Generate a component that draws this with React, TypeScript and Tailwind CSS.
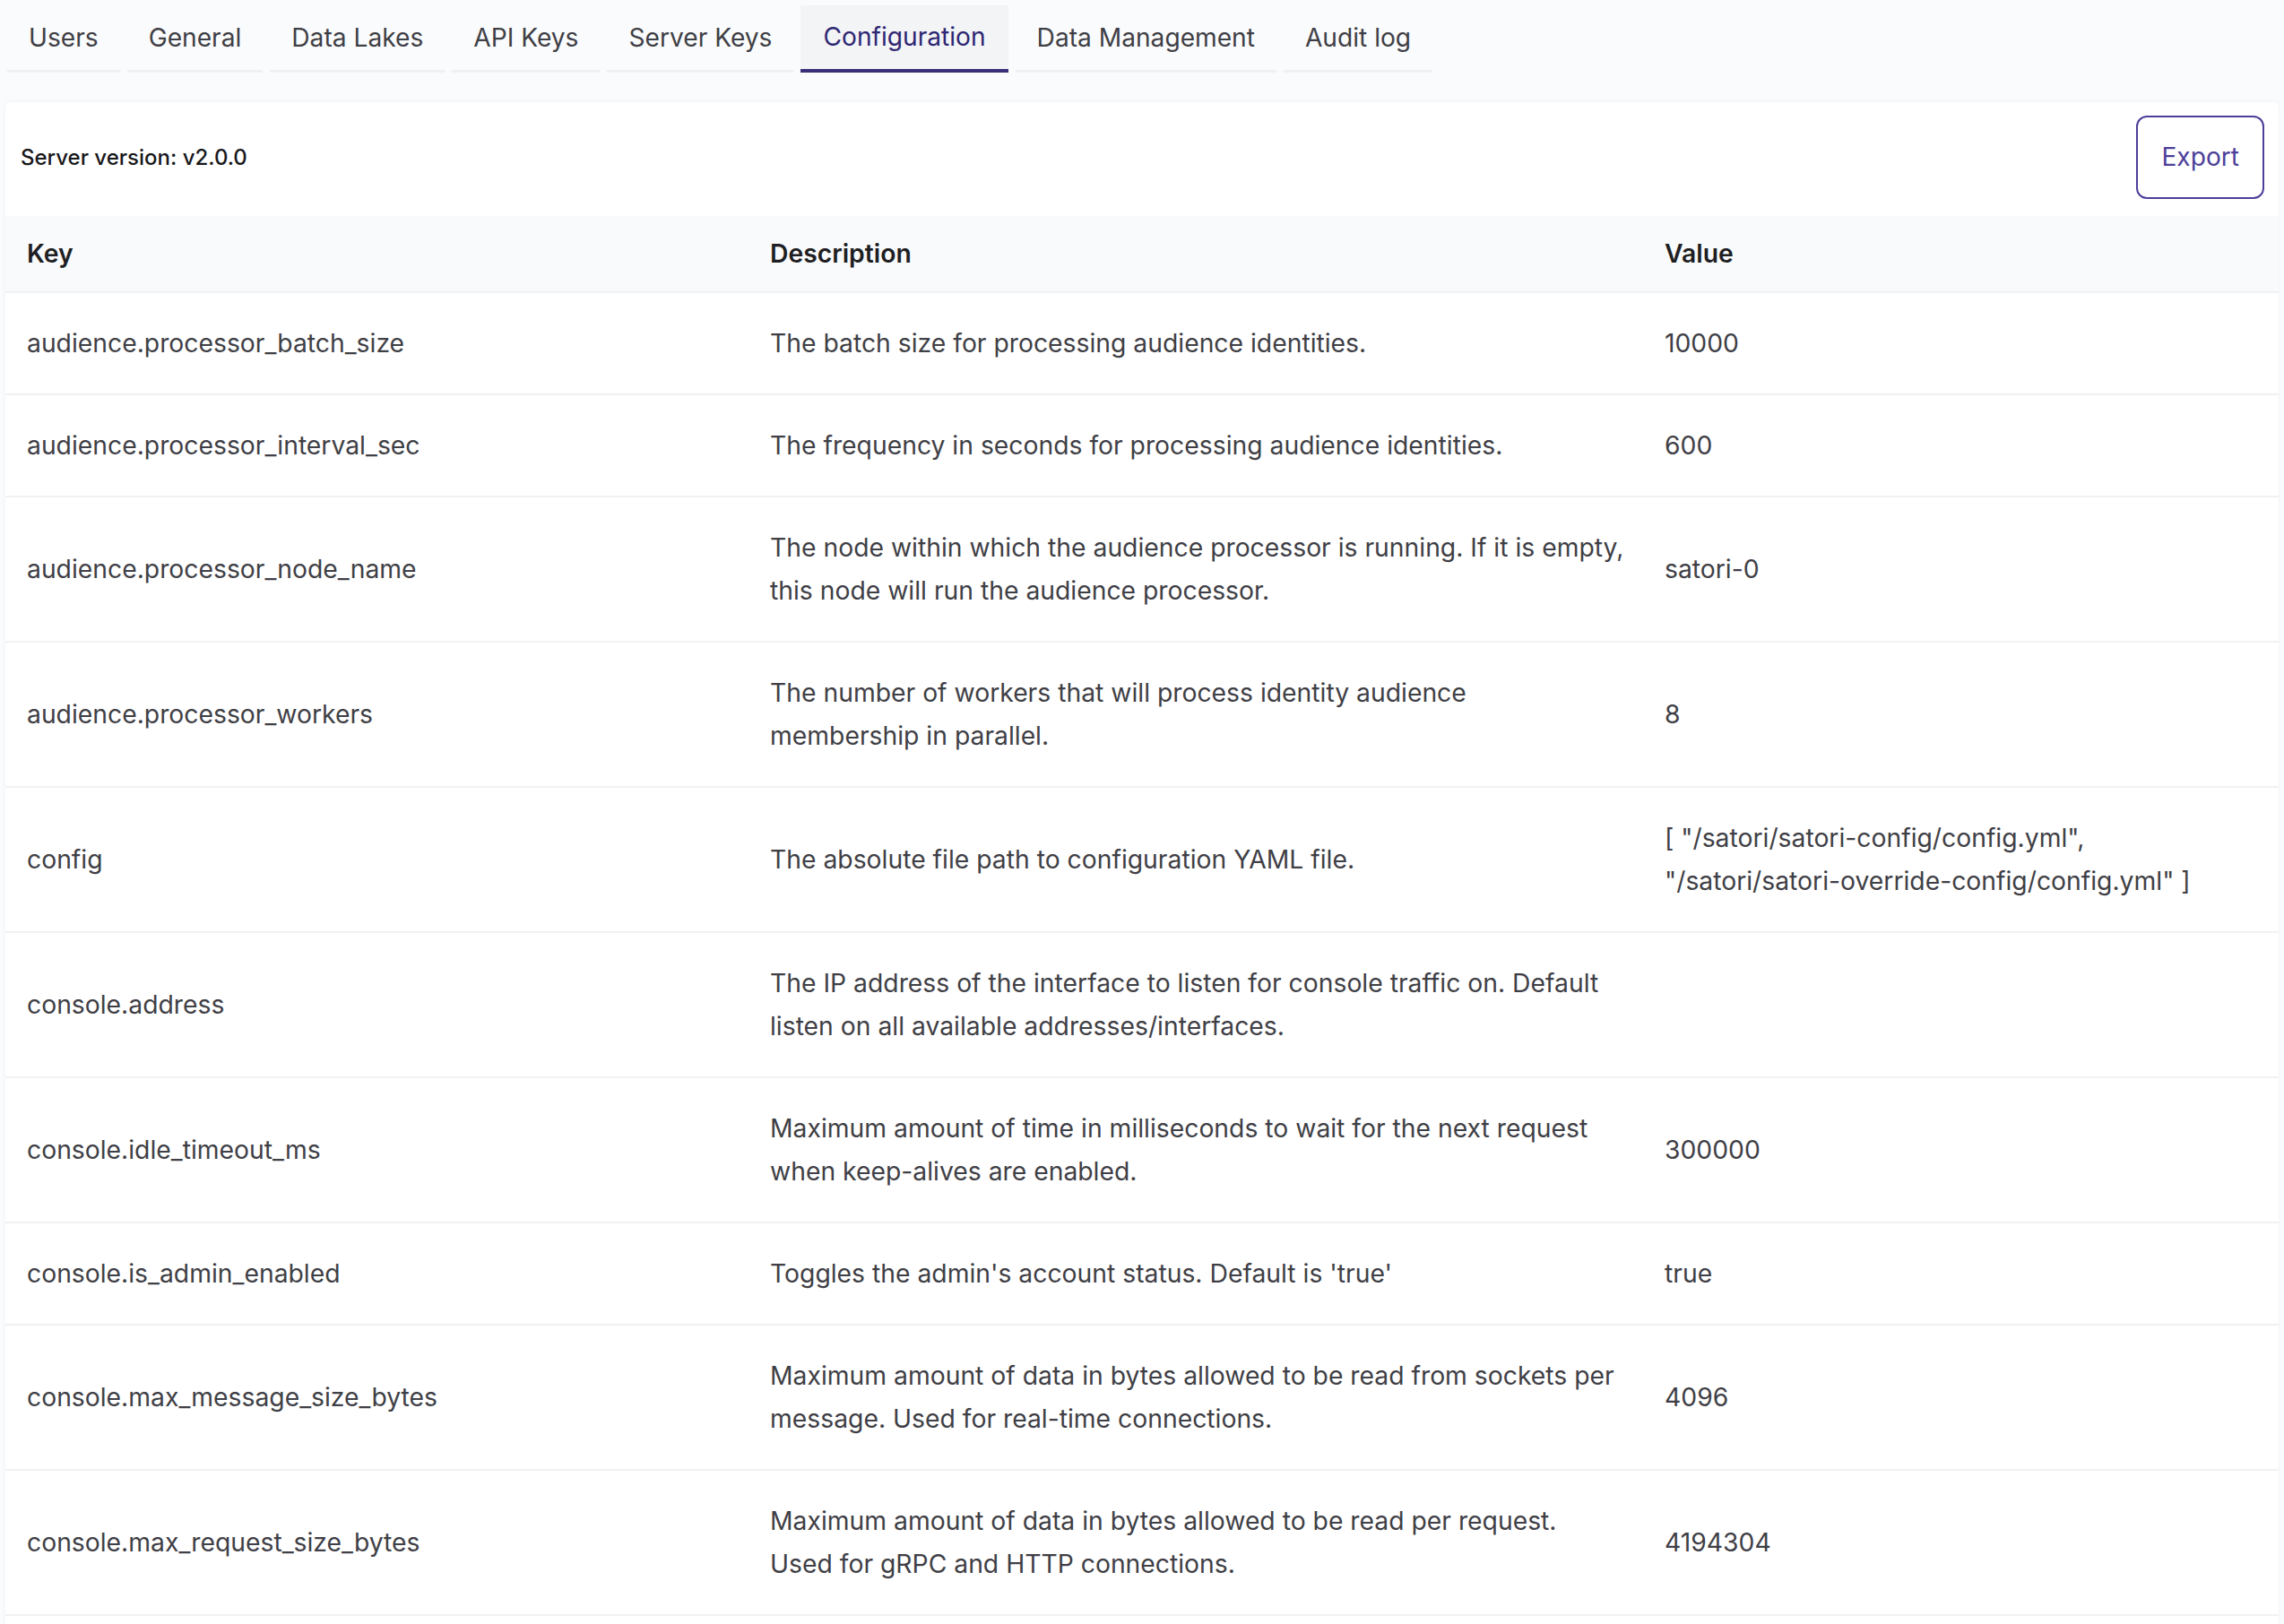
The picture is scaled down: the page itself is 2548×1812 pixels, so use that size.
import React from "react";

const tabs = [
  "Users",
  "General",
  "Data Lakes",
  "API Keys",
  "Server Keys",
  "Configuration",
  "Data Management",
  "Audit log",
];

type Row = { key: string; description: string; value: string };

// Descriptions carry their own line breaks so they wrap at the same words everywhere.
const rows: Row[] = [
  {
    key: "audience.processor_batch_size",
    description: "The batch size for processing audience identities.",
    value: "10000",
  },
  {
    key: "audience.processor_interval_sec",
    description: "The frequency in seconds for processing audience identities.",
    value: "600",
  },
  {
    key: "audience.processor_node_name",
    description:
      "The node within which the audience processor is running. If it is empty,\nthis node will run the audience processor.",
    value: "satori-0",
  },
  {
    key: "audience.processor_workers",
    description:
      "The number of workers that will process identity audience\nmembership in parallel.",
    value: "8",
  },
  {
    key: "config",
    description: "The absolute file path to configuration YAML file.",
    value: '[ "/satori/satori-config/config.yml",\n"/satori/satori-override-config/config.yml" ]',
  },
  {
    key: "console.address",
    description:
      "The IP address of the interface to listen for console traffic on. Default\nlisten on all available addresses/interfaces.",
    value: "",
  },
  {
    key: "console.idle_timeout_ms",
    description:
      "Maximum amount of time in milliseconds to wait for the next request\nwhen keep-alives are enabled.",
    value: "300000",
  },
  {
    key: "console.is_admin_enabled",
    description: "Toggles the admin's account status. Default is 'true'",
    value: "true",
  },
  {
    key: "console.max_message_size_bytes",
    description:
      "Maximum amount of data in bytes allowed to be read from sockets per\nmessage. Used for real-time connections.",
    value: "4096",
  },
  {
    key: "console.max_request_size_bytes",
    description:
      "Maximum amount of data in bytes allowed to be read per request.\nUsed for gRPC and HTTP connections.",
    value: "4194304",
  },
];

export default function App() {
  return (
    <div
      className="min-h-screen bg-[#fafbfc] text-[#3f3f46]"
      style={{ fontFamily: "Inter, 'Noto Sans', sans-serif" }}
    >
      {/* Tab strip */}
      <nav className="flex gap-2 pl-2 pt-[6px]">
        {tabs.map((t) => {
          const active = t === "Configuration";
          return (
            <div
              key={t}
              className={
                active
                  ? "flex h-[75px] items-center border-b-[4px] border-[#382f78] bg-[#f3f4f6] px-[25px] text-[28.15px] text-[#2e2773]"
                  : "flex h-[75px] items-center border-b-[3px] border-[#eef0f3] px-6 text-[28.15px] text-[#3f3f46]"
              }
            >
              {t}
            </div>
          );
        })}
      </nav>

      {/* Configuration card */}
      <div className="mx-[6px] mt-[33px] min-h-[1700px] overflow-hidden rounded-t-md bg-white shadow-[0_0_6px_rgba(0,0,0,0.04)]">
        <div className="flex items-center justify-between pb-[19px] pl-[17px] pr-4 pt-[15px]">
          <div className="text-[24px] font-medium text-[#18181b]">Server version: v2.0.0</div>
          <button className="h-[93px] rounded-xl border-2 border-[#4d3f99] px-[26px] text-[28.15px] text-[#4d3f99]">
            Export
          </button>
        </div>

        <table className="w-full table-fixed border-collapse text-left text-[28.3px] leading-[48px]">
          <colgroup>
            <col className="w-[829px]" />
            <col className="w-[998px]" />
            <col />
          </colgroup>
          <thead>
            <tr className="border-b-2 border-[#f0f1f3] bg-[#f9fafc]">
              <th className="px-6 py-[18px] font-semibold text-[#1f1f23]">Key</th>
              <th className="py-[18px] pl-6 pr-3 font-semibold text-[#1f1f23]">Description</th>
              <th className="px-6 py-[18px] font-semibold text-[#1f1f23]">Value</th>
            </tr>
          </thead>
          <tbody>
            {rows.map((r) => (
              <tr key={r.key} className="border-b-2 border-[#f0f1f3]">
                <td className="px-6 py-[32px] align-middle">{r.key}</td>
                <td className="whitespace-pre-line py-[32px] pl-6 pr-3 align-middle">{r.description}</td>
                <td className="whitespace-pre-line px-6 py-[32px] align-middle">{r.value}</td>
              </tr>
            ))}
          </tbody>
        </table>
      </div>
    </div>
  );
}
